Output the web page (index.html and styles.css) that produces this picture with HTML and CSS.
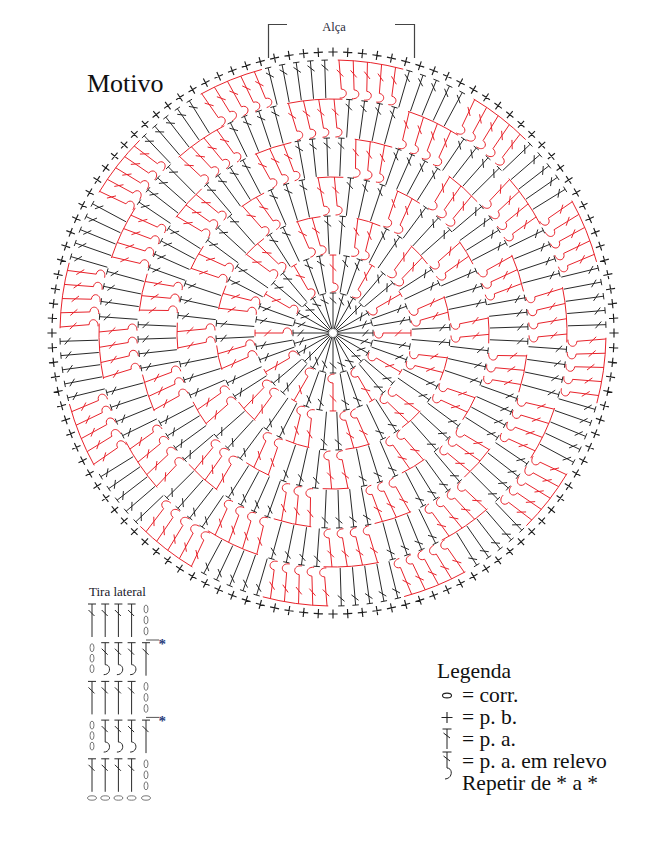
FILE: index.html
```html
<!DOCTYPE html>
<html lang="pt">
<head>
<meta charset="utf-8">
<title>Motivo</title>
<link rel="stylesheet" href="styles.css">
</head>
<body>
<main class="page">
  <svg class="motif" id="motif" width="656" height="580" viewBox="0 0 656 580">
    <text class="motif-title" x="87" y="92">Motivo</text>
    <text class="handle-label" x="334" y="31">Alça</text>
    <path class="bracket" d="M268.5 58V24.5H287M395 24.5H414.5V58"/>
    <path id="st-cross" class="st-cross"/>
    <path id="st-black" class="st-black"/>
    <path id="st-red" class="st-red"/>
  </svg>
  <section class="bottom">
    <figure class="tira">
      <figcaption class="tira-title">Tira lateral</figcaption>
      <svg id="tira" class="tira-chart" width="90" height="205" viewBox="0 0 90 205"></svg>
    </figure>
    <div class="legend">
      <div class="legend-title">Legenda</div>
      <div class="legend-row">
        <svg class="legend-icon" width="25" height="22" viewBox="0 0 25 22"><ellipse class="ic" cx="10" cy="11.5" rx="4.5" ry="2.4"/></svg>
        <span>= corr.</span>
      </div>
      <div class="legend-row">
        <svg class="legend-icon" width="25" height="22" viewBox="0 0 25 22"><path class="ic" d="M4.5 11.5H15.5M10 6V17"/></svg>
        <span>= p. b.</span>
      </div>
      <div class="legend-row">
        <svg class="legend-icon" width="25" height="22" viewBox="0 0 25 22"><path class="ic ic-thin" d="M10 1V21M5.5 1H14.5M6.5 5L13 10"/></svg>
        <span>= p. a.</span>
      </div>
      <div class="legend-row">
        <svg class="legend-icon" width="25" height="22" viewBox="0 0 25 22"><path class="ic ic-thin" d="M10 2V18C16 18 16 28.5 8 29M5.5 2H14.5M6.5 6L13 11"/></svg>
        <span>= p. a. em relevo</span>
      </div>
      <div class="legend-row">
        <span class="legend-note">Repetir de * a *</span>
      </div>
    </div>
  </section>
</main>
<script src="script.js"></script>
</body>
</html>
```

FILE: styles.css
```css
html, body {
  margin: 0;
  padding: 0;
  background: #ffffff;
}

.page {
  width: 656px;
  height: 851px;
  overflow: hidden;
  font-family: "Liberation Serif", "Times New Roman", serif;
  color: #111111;
}

.motif {
  display: block;
  overflow: visible;
}

.motif-title {
  font-family: "Liberation Serif", "Times New Roman", serif;
  font-size: 26px;
  fill: #111111;
}

.handle-label {
  font-family: "Liberation Serif", "Times New Roman", serif;
  font-size: 12.5px;
  fill: #2a2a3a;
  text-anchor: middle;
}

.bracket {
  fill: none;
  stroke: #444444;
  stroke-width: 1.2;
}

.st-black {
  fill: none;
  stroke: #1e1e1e;
  stroke-width: 0.95;
}

.st-red {
  fill: none;
  stroke: #e8232b;
  stroke-width: 1;
}

.st-cross {
  fill: none;
  stroke: #1e1e1e;
  stroke-width: 1.15;
}

.bottom {
  display: flex;
  align-items: flex-start;
  height: 271px;
}

.tira {
  margin: 0 0 0 88px;
  padding-top: 4px;
  width: 90px;
}

.tira-title {
  font-size: 13px;
  line-height: 16px;
  white-space: nowrap;
  margin-left: 1px;
  color: #1a1a2a;
}

.tira-chart {
  display: block;
  overflow: visible;
}

.tira-line {
  fill: none;
  stroke: #2a2a2a;
  stroke-width: 1;
}

.tira-oval {
  fill: none;
  stroke: #555555;
  stroke-width: 0.8;
}

.tira-link {
  fill: none;
  stroke: #555555;
  stroke-width: 1;
}

.tira-star {
  font-family: "Liberation Serif", "Times New Roman", serif;
  font-size: 15px;
  font-weight: bold;
  fill: #2b3d7c;
}

.legend {
  margin: 80px 0 0 259px;
  font-size: 21.5px;
  line-height: 22px;
  white-space: nowrap;
}

.legend-title {
  margin-bottom: 2px;
}

.legend-row {
  display: flex;
  height: 22px;
}

.legend-icon {
  flex: none;
  width: 25px;
  height: 22px;
  overflow: visible;
}

.ic {
  fill: none;
  stroke: #222222;
  stroke-width: 1.1;
}

.ic-thin {
  stroke-width: 1;
}

.legend-note {
  margin-left: 25px;
}
```

FILE: script.js
```js
(function () {
  var cx = 333, cy = 333;
  function pt(th, r, t) {
    var a = th * Math.PI / 180, s = Math.sin(a), c = Math.cos(a);
    return (cx + r * c + t * s).toFixed(2) + ' ' + (cy - r * s + t * c).toFixed(2);
  }
  var R = [0, 40, 78, 117, 156, 195, 234, 273];
  var N = [2, 3, 4, 5, 7, 8, 10];
  var NR = [0, 1, 2, 2, 3, 4, 5];
  var blk = '', red = '', crs = '';
  var DEG = 180 / Math.PI;

  function blackSt(th, ri, ro) {
    blk += 'M' + pt(th, ri, 0) + 'L' + pt(th, ro, 0) +
      'M' + pt(th, ro, -3.2) + 'L' + pt(th, ro, 3.2) +
      'M' + pt(th, ro - 4.5, -3.3) + 'L' + pt(th, ro - 10.5, 3.3);
  }
  function redSt(th, ri, ro, lean) {
    var rb = ri + 10;
    red += 'M' + pt(th, ro, 0) + 'L' + pt(th, rb, lean) +
      'C' + pt(th, rb, lean + 7) + ' ' + pt(th, ri + 1, lean + 7) + ' ' + pt(th, ri + 1, lean - 1.5);
    var f = 0.45, rc = ro - (ro - rb) * f, tc = lean * f;
    red += 'M' + pt(th, rc + 3.3, tc - 3.3) + 'L' + pt(th, rc - 3.3, tc + 3.3);
  }
  function redArc(th1, th2, r) {
    var a1 = th1 / DEG, a2 = th2 / DEG;
    red += 'M' + (cx + r * Math.cos(a1)).toFixed(2) + ' ' + (cy - r * Math.sin(a1)).toFixed(2) +
      'A' + r + ' ' + r + ' 0 0 1 ' + (cx + r * Math.cos(a2)).toFixed(2) + ' ' + (cy - r * Math.sin(a2)).toFixed(2);
  }

  for (var k = 1; k <= 7; k++) {
    var n = N[k - 1], nr = NR[k - 1], sp = 30 / n, ri = R[k - 1], ro = R[k];
    var A;
    if (k === 1) {
      A = 90;
    } else {
      var rs = 90 - (k - 2) * 12.25;
      A = rs + (n - nr) * sp;
    }
    for (var s = 0; s < 12; s++) {
      var base = A + s * 30;
      for (var j = 0; j < n; j++) {
        var th = base - j * sp;
        if (j < n - nr) blackSt(th, k === 1 ? 4 : ri + 1, ro);
        else redSt(th, ri, ro, k === 2 ? 0 : 3);
      }
      if (nr > 0) {
        var first = base - (n - nr) * sp, last = base - (n - 1) * sp;
        if (nr === 1) {
          var e = 3.3 / ro * DEG;
          redArc(first + e, first - e, ro);
        } else {
          var e0 = 1.2 / ro * DEG;
          var e1 = Math.max(0.55 * sp, 3.2 / ro * DEG);
          redArc(first + e0, last - e1, ro);
        }
      }
    }
  }
  for (var i = 0; i < 120; i++) {
    var t = 90 + 3 * i;
    crs += 'M' + pt(t, 281 - 4.6, 0) + 'L' + pt(t, 281 + 4.6, 0) +
      'M' + pt(t, 281, -4.6) + 'L' + pt(t, 281, 4.6);
  }
  document.getElementById('st-black').setAttribute('d', blk);
  document.getElementById('st-red').setAttribute('d', red);
  document.getElementById('st-cross').setAttribute('d', crs);

  /* Tira lateral */
  var cols = [4, 17.2, 30.4, 43.6, 58];
  var tl = '', ov = '', links = '', stars = '';
  function pa(x, top, len) {
    return 'M' + x + ' ' + top + 'V' + (top + len) +
      'M' + (x - 4) + ' ' + top + 'H' + (x + 4) +
      'M' + (x - 3.5) + ' ' + (top + 6) + 'L' + (x + 2.5) + ' ' + (top + 12);
  }
  function relief(x, top) {
    return 'M' + x + ' ' + top + 'V' + (top + 22) +
      'C' + (x + 6) + ' ' + (top + 22) + ' ' + (x + 6) + ' ' + (top + 32) + ' ' + (x - 1.5) + ' ' + (top + 32) +
      'M' + (x - 4) + ' ' + top + 'H' + (x + 4) +
      'M' + (x - 3.5) + ' ' + (top + 6) + 'L' + (x + 2.5) + ' ' + (top + 12);
  }
  function oval(x, y, rx, ry) {
    return '<ellipse class="tira-oval" cx="' + x + '" cy="' + y.toFixed(2) + '" rx="' + rx + '" ry="' + ry + '"/>';
  }
  for (var r = 0; r < 5; r++) {
    var top = 4 + 38.7 * r;
    if (r % 2 === 0) {
      for (var c = 0; c < 4; c++) tl += pa(cols[c], top, 33);
      ov += oval(58, top + 5, 2, 4) + oval(58, top + 16, 2, 4) + oval(58, top + 27, 2, 4);
      if (r < 4) {
        links += 'M58 ' + (top + 36).toFixed(2) + 'H71';
        stars += '<text class="tira-star" x="70.5" y="' + (top + 44.5).toFixed(2) + '">*</text>';
      }
    } else {
      ov += oval(4, top + 5, 2, 4) + oval(4, top + 15.5, 2, 4) + oval(4, top + 26, 2, 4);
      for (var c2 = 1; c2 < 4; c2++) tl += relief(cols[c2], top);
      tl += pa(58, top, 33);
    }
  }
  for (var b = 0; b < 5; b++) ov += oval(cols[b], 198, 4.4, 2.2);
  document.getElementById('tira').innerHTML =
    '<path class="tira-line" d="' + tl + '"/>' +
    '<path class="tira-link" d="' + links + '"/>' + ov + stars;
})();
```
